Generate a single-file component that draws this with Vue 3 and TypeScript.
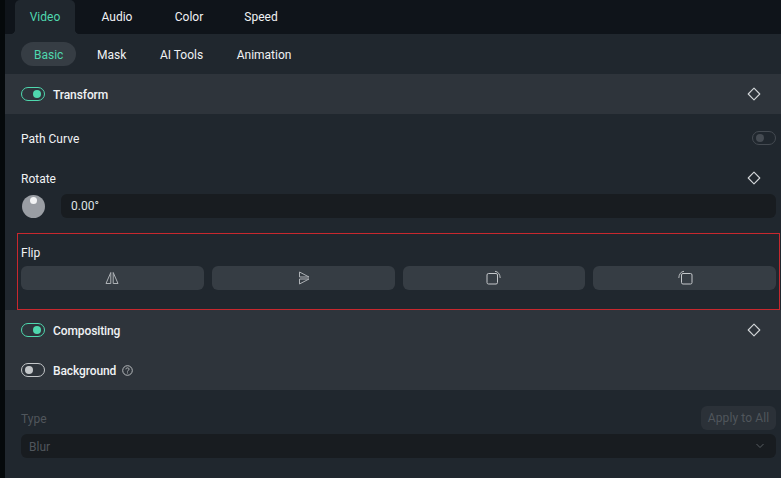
<script setup lang="ts">
const mainTabs: string[] = ['Video', 'Audio', 'Color', 'Speed']
const subTabs: string[] = ['Basic', 'Mask', 'AI Tools', 'Animation']
</script>

<template>
  <div class="app">
    <div class="panel">
      <nav class="tabs">
        <div v-for="(t, i) in mainTabs" :key="t" class="tab" :class="{ active: i === 0 }">{{ t }}</div>
      </nav>
      <nav class="subtabs">
        <div v-for="(t, i) in subTabs" :key="t" class="subtab" :class="{ active: i === 0 }">{{ t }}</div>
      </nav>

      <header class="section-head">
        <span class="toggle on"><i></i></span>
        <span class="title">Transform</span>
        <svg class="diamond" width="14" height="14" viewBox="0 0 14 14"><path d="M7 1.2 12.8 7 7 12.8 1.2 7Z" fill="none" stroke="#d3d6d9" stroke-width="1.1" stroke-linejoin="round" /></svg>
      </header>

      <div class="row path-row">
        <span class="label">Path Curve</span>
        <span class="toggle disabled"><i></i></span>
      </div>

      <div class="row rotate-row">
        <span class="label">Rotate</span>
        <svg class="diamond" width="14" height="14" viewBox="0 0 14 14"><path d="M7 1.2 12.8 7 7 12.8 1.2 7Z" fill="none" stroke="#d3d6d9" stroke-width="1.1" stroke-linejoin="round" /></svg>
      </div>
      <div class="dial-row">
        <span class="dial"><i></i></span>
        <div class="input">0.00°</div>
      </div>

      <section class="flip">
        <div class="flip-label">Flip</div>
        <div class="flip-buttons">
          <button class="btn">
            <svg width="14" height="14" viewBox="0 0 14 14" fill="none" stroke="#aeb2b6" stroke-width="1"><path d="M5.8 1.5V12.5H1Z" /><path d="M8.2 1.5V12.5H13Z" /></svg>
          </button>
          <button class="btn">
            <svg width="14" height="14" viewBox="0 0 14 14" fill="none" stroke="#aeb2b6" stroke-width="1"><path d="M3.5 1 13 6H3.5Z" /><path d="M3.5 8H13L3.5 13Z" /></svg>
          </button>
          <button class="btn">
            <svg width="16" height="16" viewBox="0 0 16 16" fill="none" stroke="#c4c7ca" stroke-width="1"><rect x="1" y="3.5" width="10.5" height="10.5" rx="1.5" /><path d="M9 1.3C12 1.6 14 4 14.2 8" stroke-width=".9" /></svg>
          </button>
          <button class="btn">
            <svg width="16" height="16" viewBox="0 0 16 16" fill="none" stroke="#c4c7ca" stroke-width="1"><rect x="4.5" y="3.5" width="10.5" height="10.5" rx="1.5" /><path d="M7 1.3C4 1.6 2 4 1.8 8" stroke-width=".9" /></svg>
          </button>
        </div>
      </section>

      <div class="compositing">
        <div class="comp-row">
          <span class="toggle on"><i></i></span>
          <span class="title">Compositing</span>
          <svg class="diamond" width="14" height="14" viewBox="0 0 14 14"><path d="M7 1.2 12.8 7 7 12.8 1.2 7Z" fill="none" stroke="#d3d6d9" stroke-width="1.1" stroke-linejoin="round" /></svg>
        </div>
        <div class="comp-row">
          <span class="toggle off"><i></i></span>
          <span class="title">Background</span>
          <svg class="help" width="11" height="11" viewBox="0 0 11 11" fill="none" stroke="#c4c7ca" stroke-width=".9"><circle cx="5.5" cy="5.5" r="4.8" /><path d="M3.9 4.3C3.9 3.4 4.6 2.9 5.5 2.9S7.1 3.4 7.1 4.2C7.1 5.3 5.5 5.3 5.5 6.5" /><path d="M5.5 7.5V8.4" /></svg>
        </div>
      </div>

      <div class="type-row">
        <span class="label">Type</span>
        <span class="apply">Apply to All</span>
      </div>
      <div class="select">
        <span class="label">Blur</span>
        <svg width="10" height="6" viewBox="0 0 10 6" fill="none" stroke="#575c61" stroke-width="1"><path d="M1.5 1 5 4.5 8.5 1" /></svg>
      </div>
    </div>
  </div>
</template>

<style scoped>
.app {
  width: 781px;
  height: 478px;
  background: #05090b;
  padding-left: 5px;
  box-sizing: border-box;
  overflow: hidden;
  font-family: Roboto, "Noto Sans", sans-serif;
  font-size: 12px;
  color: #f0f2f4;
}
.panel {
  height: 100%;
  background: #20272e;
  display: flex;
  flex-direction: column;
}
.tabs {
  display: flex;
  height: 34px;
  flex: none;
  padding-left: 10px;
  background: #0f141a;
}
.tab {
  position: relative;
  width: 72px;
  box-sizing: border-box;
  text-align: center;
  line-height: 34px;
}
.tab.active {
  width: 60px;
  margin-right: 6px;
  background: #20272e;
  color: #4fd8ae;
  border-radius: 5px 5px 0 0;
}
.tab.active::before,
.tab.active::after {
  content: "";
  position: absolute;
  bottom: 0;
  width: 5px;
  height: 5px;
}
.tab.active::before {
  left: -5px;
  background: radial-gradient(circle at 0 0, transparent 5px, #20272e 5.5px);
}
.tab.active::after {
  right: -5px;
  background: radial-gradient(circle at 100% 0, transparent 5px, #20272e 5.5px);
}
.subtabs {
  display: flex;
  align-items: center;
  height: 40px;
  flex: none;
  padding-left: 16px;
  gap: 7.6px;
}
.subtab {
  height: 24px;
  line-height: 26px;
  padding: 0 13px;
}
.subtab.active {
  background: #363d44;
  border-radius: 12px;
  color: #4fd8ae;
}
.section-head {
  display: flex;
  align-items: center;
  height: 40px;
  flex: none;
  padding: 0 20px 0 16px;
  background: #2e343b;
}
.title {
  margin-left: 8px;
  padding-top: 1px;
  font-weight: 500;
  letter-spacing: -0.1px;
}
.label {
  padding-top: 1px;
}
.diamond {
  margin-left: auto;
}
.toggle {
  box-sizing: border-box;
  display: flex;
  align-items: center;
  width: 24px;
  height: 14px;
  padding: 0 3px;
  border-radius: 7px;
  border: 1px solid;
  flex: none;
}
.toggle i {
  width: 8px;
  height: 8px;
  border-radius: 50%;
  background: currentColor;
}
.toggle.on {
  color: #4fd8ae;
  justify-content: flex-end;
}
.toggle.off {
  color: #c4c7ca;
}
.toggle.disabled {
  color: #454b52;
}
.row {
  display: flex;
  align-items: center;
  justify-content: space-between;
  flex: none;
}
.path-row {
  height: 40px;
  margin-top: 4px;
  padding: 0 5px 0 16px;
}
.rotate-row {
  height: 32px;
  margin-top: 4px;
  padding: 0 20px 0 16px;
}
.dial-row {
  display: flex;
  align-items: center;
  gap: 16px;
  height: 24px;
  flex: none;
  padding: 0 5px 0 17px;
}
.dial {
  position: relative;
  width: 23px;
  height: 23px;
  border-radius: 50%;
  background: #9a9ea4;
  flex: none;
}
.dial i {
  position: absolute;
  top: 2px;
  left: 8px;
  width: 7px;
  height: 7px;
  border-radius: 50%;
  background: #f2f3f4;
}
.input {
  flex: 1;
  height: 24px;
  line-height: 25px;
  padding-left: 10px;
  border-radius: 6px;
  background: #181c20;
  color: #dfe2e5;
}
.flip {
  box-sizing: border-box;
  height: 77px;
  margin: 15px 1px 0 12px;
  border: 1px solid #c8282e;
  padding: 10px 3px 0 3px;
  flex: none;
}
.flip-label {
  line-height: 19px;
  height: 18px;
}
.flip-buttons {
  display: flex;
  gap: 8px;
  margin-top: 4px;
}
.btn {
  flex: 1;
  height: 24px;
  padding: 0;
  border: 0;
  border-radius: 6px;
  background: #363d44;
  display: flex;
  align-items: center;
  justify-content: center;
}
.compositing {
  height: 80px;
  flex: none;
  background: #2e343b;
}
.comp-row {
  display: flex;
  align-items: center;
  height: 40px;
  padding: 0 20px 0 16px;
}
.help {
  margin-left: 6px;
}
.type-row {
  display: flex;
  align-items: center;
  justify-content: space-between;
  height: 24px;
  margin-top: 16px;
  flex: none;
  padding: 0 5px 0 16px;
  color: #50565c;
}
.apply {
  height: 24px;
  width: 75px;
  line-height: 25px;
  text-align: center;
  border-radius: 6px;
  background: #2b3138;
  color: #50565c;
  letter-spacing: 0.1px;
}
.select {
  display: flex;
  align-items: center;
  justify-content: space-between;
  height: 24px;
  margin: 4px 5px 0 16px;
  padding: 0 11px 0 8px;
  border-radius: 6px;
  background: #181c20;
  color: #50565c;
  flex: none;
}
</style>
